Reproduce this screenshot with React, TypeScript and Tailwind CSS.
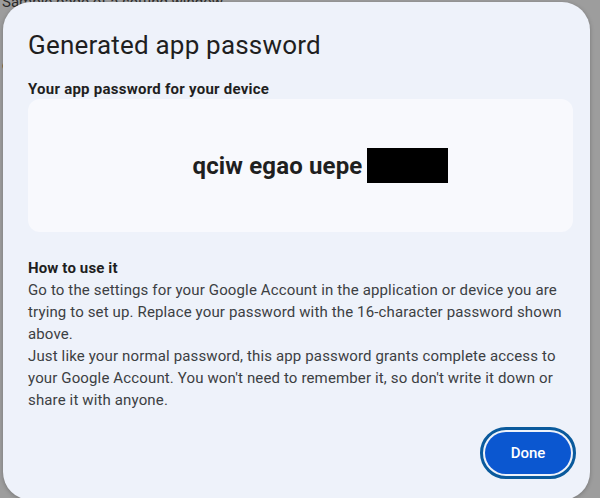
export default function App() {
  return (
    <div className="relative h-[498px] w-[600px] overflow-hidden bg-[#9d9d9d] font-['Roboto',sans-serif]">
      {/* page behind the dialog */}
      <div className="absolute left-[2px] top-[-9px] space-y-[40px] text-[15px] text-[#2a2a2a]">
        <p>Sample page of a setting window</p>
        <p>e</p>
      </div>

      {/* dialog */}
      <div className="absolute left-[3px] top-[2px] flex h-[498px] w-[587px] flex-col rounded-[28px] bg-[#eef2fa] pl-[25px] pr-[17px] pt-[27px] shadow-[0_1px_4px_rgba(0,0,0,0.25)]">
        <h1 className="text-[26px] leading-[32px] tracking-[0.2px] text-[#1f1f1f]">Generated app password</h1>

        <p className="mt-[18px] text-[15px] font-bold leading-[20px] tracking-[0.25px] text-[#1f1f1f]">
          Your app password for your device
        </p>

        <div className="flex h-[133px] items-center justify-center gap-[5px] rounded-[12px] bg-[#f8f9fd] pl-[40px]">
          <span className="text-[24px] font-bold tracking-[0.15px] text-[#1f1f1f]">qciw egao uepe</span>
          <span className="h-[35px] w-[81px] bg-black" />
        </div>

        <div className="mt-[25px] text-[15px] leading-[22px] tracking-[0.14px] text-[#3c4043]">
          <p className="font-bold text-[#1f1f1f]">How to use it</p>
          <p>
            Go to the settings for your Google Account in the application or device you are
            trying to set up. Replace your password with the 16-character password shown
            above.
          </p>
          <p>
            Just like your normal password, this app password grants complete access to your
            Google Account. You won&apos;t need to remember it, so don&apos;t write it down or
            share it with anyone.
          </p>
        </div>

        <div className="-mr-[3px] mt-[16px] flex justify-end">
          <div className="rounded-full border-[3px] border-[#0a5a9c] p-[2px]">
            <button className="h-[42px] w-[86px] rounded-full bg-[#0b57d0] text-[15px] font-medium text-white">
              Done
            </button>
          </div>
        </div>
      </div>
    </div>
  );
}
